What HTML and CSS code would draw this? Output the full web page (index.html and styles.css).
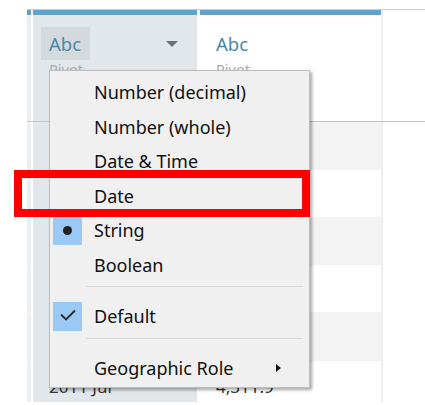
FILE: index.html
```html
<!DOCTYPE html>
<html>
<head>
<meta charset="utf-8">
<link rel="stylesheet" href="styles.css">
</head>
<body>
<div class="sheet">
  <div class="grid">
    <div class="col strip bar">
      <div class="head"></div>
      <div class="row r1"></div><div class="row r2"></div><div class="row r3"></div><div class="row r4"></div><div class="row r5"></div><div class="row r6"></div>
    </div>
    <div class="col gap2">
      <div class="head"></div>
    </div>
    <div class="col cola bar">
      <div class="head">
        <div class="headline">
          <span class="pill">Abc</span>
          <span class="caret"></span>
        </div>
        <div class="sub">Pivot</div>
      </div>
      <div class="row r1"></div><div class="row r2"></div><div class="row r3"></div><div class="row r4"></div><div class="row r5"></div>
      <div class="row r6"><span class="cell">2011 Jul</span></div>
    </div>
    <div class="col gap3">
      <div class="head"></div>
    </div>
    <div class="col colb bar">
      <div class="head">
        <div class="headline">
          <span class="name">Abc</span>
        </div>
        <div class="sub">Pivot</div>
      </div>
      <div class="row r1 alt"></div><div class="row r2"></div><div class="row r3 alt"></div><div class="row r4"></div><div class="row r5 alt"></div>
      <div class="row r6"><span class="cell">4,311.9</span></div>
    </div>
    <div class="col divider">
      <div class="head"></div>
    </div>
    <div class="col rest">
      <div class="head"></div>
    </div>
  </div>

  <div class="menu">
    <div class="item"><span class="ico"></span><span class="label">Number (decimal)</span></div>
    <div class="item"><span class="ico"></span><span class="label">Number (whole)</span></div>
    <div class="item"><span class="ico"></span><span class="label">Date &amp; Time</span></div>
    <div class="item"><span class="ico"></span><span class="label">Date</span></div>
    <div class="item"><span class="ico on"><span class="dot"></span></span><span class="label">String</span></div>
    <div class="item"><span class="ico"></span><span class="label">Boolean</span></div>
    <div class="sep"></div>
    <div class="item"><span class="ico on"><svg width="29" height="29" viewBox="0 0 29 29"><path d="M8 12.5 L13 17.5 L22 8.5" fill="none" stroke="#2b2b2b" stroke-width="1.8"/></svg></span><span class="label">Default</span></div>
    <div class="sep"></div>
    <div class="item"><span class="ico"></span><span class="label">Geographic Role</span><span class="arrow"></span></div>
  </div>

  <div class="highlight"></div>
</div>
</body>
</html>
```

FILE: styles.css
```css
html, body {
  margin: 0;
  padding: 0;
  background: #ffffff;
}

body {
  font-family: "Noto Sans", "Open Sans", sans-serif;
  width: 425px;
  height: 405px;
  overflow: hidden;
}

.sheet {
  position: relative;
  width: 425px;
  height: 405px;
  box-sizing: border-box;
  padding: 9px 0 0 27px;
}

.grid {
  display: flex;
  border-top: 1px solid #cbcbcb;
  height: 392px;
}

.col {
  display: flex;
  flex-direction: column;
  border-top: 5px solid transparent;
}

.col.bar {
  border-top-color: #62a2c6;
}

.head {
  height: 106px;
  border-bottom: 1px solid #c4c4c4;
  flex: none;
}

.row { flex: none; }
.r1 { height: 48px; }
.r2 { height: 47px; }
.r3 { height: 48px; }
.r4 { height: 47px; }
.r5 { height: 49px; }
.r6 { flex: 1; }

.strip {
  width: 4px;
  background: #eceff1;
}
.strip .row { border-top: 1px solid #f6f7f8; box-sizing: border-box; }

.gap2 { width: 2px; background: #ffffff; }
.gap3 { width: 3px; background: #ffffff; }

.cola {
  width: 164px;
  background: #e2e7eb;
}

.colb {
  width: 181px;
  background: #ffffff;
}

.colb .alt { background: #f3f3f3; }

.divider {
  width: 2px;
  background: #efefef;
}

.rest {
  flex: 1;
  background: #ffffff;
}

.headline {
  display: flex;
  align-items: center;
  justify-content: space-between;
  height: 33px;
  margin-top: 12px;
}

.cola .headline { padding: 0 19px 0 8px; }
.colb .headline { padding: 0 16px; }

.pill {
  background: #d4d9dd;
  height: 33px;
  line-height: 33px;
  padding: 0 9px 0 8px;
  font-size: 18.5px;
  color: #4a88a5;
}

.name {
  font-size: 18.5px;
  line-height: 33px;
  color: #4a88a5;
}

.caret {
  width: 0;
  height: 0;
  border-left: 6px solid transparent;
  border-right: 6px solid transparent;
  border-top: 6px solid #6b7076;
}

.sub {
  font-size: 14.5px;
  line-height: 18px;
  color: #aaaaaa;
  padding-left: 16px;
}

.cell {
  display: block;
  padding: 16px 0 0 16px;
  font-size: 17px;
  line-height: 20px;
  color: #333333;
}

/* context menu */
.menu {
  position: absolute;
  left: 49px;
  top: 70px;
  width: 261px;
  box-sizing: border-box;
  background: #f0f0f0;
  border: 1px solid #bdbdbd;
  box-shadow: 2px 2px 3px rgba(0, 0, 0, 0.35);
  padding: 4px 0 2px 3px;
  font-family: "Noto Sans", "Open Sans", sans-serif;
  font-size: 18px;
  color: #111111;
}

.item {
  display: flex;
  align-items: center;
  height: 34.5px;
}

.ico {
  width: 29px;
  height: 29px;
  flex: none;
  display: flex;
  align-items: center;
  justify-content: center;
}

.ico.on { background: #99c9f4; }

.dot {
  width: 9px;
  height: 9px;
  border-radius: 50%;
  background: #222222;
}

.label {
  margin-left: 12px;
  flex: 1;
}

.arrow {
  width: 0;
  height: 0;
  border-top: 4px solid transparent;
  border-bottom: 4px solid transparent;
  border-left: 5px solid #1a1a1a;
  margin-right: 28px;
}

.sep {
  height: 1px;
  background: #d8d8d8;
  margin: 4px 6px 12px 33px;
}

.highlight {
  position: absolute;
  left: 14px;
  top: 170px;
  width: 296px;
  height: 47px;
  box-sizing: border-box;
  border: 8px solid #ff0000;
}
```
